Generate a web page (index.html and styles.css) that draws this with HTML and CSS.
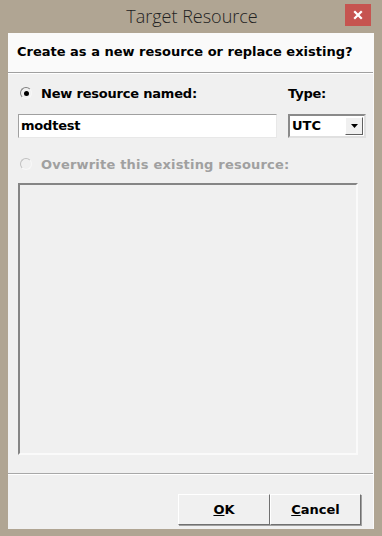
FILE: index.html
```html
<!DOCTYPE html>
<html>
<head>
<meta charset="utf-8">
<link rel="stylesheet" href="styles.css">
</head>
<body>
<div class="window">
  <div class="titlebar">
    <span class="title">Target Resource</span>
    <span class="close">
      <svg width="10" height="10" viewBox="0 0 10 10"><path d="M2 2 L8 8 M8 2 L2 8" stroke="#fff" stroke-width="2.2" stroke-linecap="square"/></svg>
    </span>
  </div>
  <div class="client">
    <div class="header">Create as a new resource or replace existing?</div>
    <div class="body">
      <div class="grid">
        <label class="radio"><span class="dot checked"></span>New resource named:</label>
        <span class="type-label">Type:</span>
        <div class="textbox">modtest</div>
        <div class="select"><span>UTC</span><span class="arrow"><svg width="7" height="4" viewBox="0 0 7 4"><path d="M0 0 H7 L3.5 4 Z" fill="#000"/></svg></span></div>
      </div>
      <label class="radio disabled"><span class="dot"></span>Overwrite this existing resource:</label>
      <div class="listbox"></div>
    </div>
    <div class="footer">
      <button class="btn"><u>O</u>K</button>
      <button class="btn"><u>C</u>ancel</button>
    </div>
  </div>
</div>
</body>
</html>
```
FILE: styles.css
```css
* { box-sizing: border-box; }
html, body { margin: 0; padding: 0; }
body { width: 382px; height: 536px; background: #afa392; font-family: "DejaVu Sans", sans-serif; overflow: hidden; }
.window { width: 382px; height: 536px; display: flex; flex-direction: column; background: #b0a593; padding: 0 8px 7px 8px; }
.titlebar { height: 33px; flex: none; position: relative; display: flex; align-items: center; justify-content: center; }
.title { font-family: "Open Sans", sans-serif; font-weight: 300; font-size: 18px; color: #222; margin-left: 2px; margin-top: -1px; }
.close { position: absolute; right: 3px; top: 4px; width: 26px; height: 22px; background: #c65450; display: flex; align-items: center; justify-content: center; }
.client { flex: 1; min-height: 0; background: #f0f0f0; display: flex; flex-direction: column; border-right: 1px solid #fafafa; }
.header { height: 40px; flex: none; background: #fafafa; border-bottom: 1px solid #a0a0a0; box-shadow: 0 1px 0 #fff; font-weight: bold; font-size: 13px; color: #000; padding: 11px 0 0 9px; }
.body { padding: 9px 0 0 10px; display: flex; flex-direction: column; flex: none; }
.grid { display: grid; grid-template-columns: 259px 78px; column-gap: 11px; grid-template-rows: 22px 24px; row-gap: 10px; align-items: center; }
.radio { display: flex; align-items: center; font-weight: bold; font-size: 13px; color: #000; letter-spacing: -0.2px; }
.radio.disabled { color: #a0a0a0; margin-top: 15px; height: 22px; letter-spacing: 0.2px; }
.dot { width: 12px; height: 12px; border-radius: 50%; margin: 0 9px 0 2px; position: relative; background: #f0f0f0; border: 1px solid; border-color: #808080 #f8f8f8 #f8f8f8 #808080; }
.dot.checked::after { content: ""; position: absolute; left: 2.5px; top: 2.5px; width: 5px; height: 5px; border-radius: 50%; background: #000; }
.disabled .dot { border-color: #c0c0c0 #f8f8f8 #f8f8f8 #c0c0c0; }
.type-label { font-weight: bold; font-size: 13px; letter-spacing: -0.2px; }
.textbox { height: 24px; background: #fff; border: 1px solid; border-color: #a0a0a0 #e8e8e8 #e8e8e8 #a0a0a0; font-weight: bold; font-size: 13px; padding: 3px 0 0 2px; letter-spacing: -0.2px; }
.select { height: 24px; background: #fff; border: 2px solid; border-color: #8a8a8a #e0e0e0 #e0e0e0 #8a8a8a; display: flex; justify-content: space-between; font-weight: bold; font-size: 13px; padding: 2px 0 0 2px; }
.arrow { width: 18px; height: 18px; margin-top: -1px; margin-right: 1px; background: #f0f0f0; border: 1px solid; border-color: #fff #606060 #606060 #fff; display: flex; align-items: center; justify-content: center; }
.listbox { margin-top: 8px; width: 340px; height: 272px; background: #f0f0f0; border: 2px solid; border-color: #858585 #fafafa #fafafa #858585; }
.footer { margin-top: auto; flex: none; border-top: 1px solid #a8a8a8; box-shadow: inset 0 1px 0 #fff; padding: 20px 0 0 170px; display: flex; height: 56px; }
.btn { width: 92px; height: 31px; background: #f0f0f0; border: 1px solid; border-color: #fff #707070 #707070 #fff; box-shadow: 1px 1px 0 #a0a0a0; font-family: "DejaVu Sans", sans-serif; font-weight: bold; font-size: 13px; color: #000; padding: 0; margin: 0; }
.btn + .btn { width: 91px; }
```
